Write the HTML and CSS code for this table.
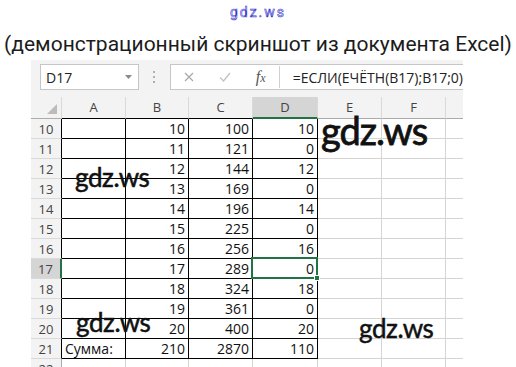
FILE: index.html
```html
<!DOCTYPE html>
<html lang="ru">
<head>
<meta charset="utf-8">
<title>Excel</title>
<link rel="stylesheet" href="styles.css">
</head>
<body>
<div class="site">gdz.ws</div>
<h1 class="title">(демонстрационный скриншот из документа Excel)</h1>
<div class="excel">
  <div class="toolbar">
    <div class="namebox"><span>D17</span><svg class="caret" width="7" height="4" viewBox="0 0 7 4"><path d="M0 0H7L3.5 4Z" fill="#8a8a8a"/></svg></div>
    <div class="grip"><i></i><i></i><i></i></div>
    <div class="fbar">
      <span class="fbtn"><svg width="10" height="10" viewBox="0 0 10 10"><path d="M1 1L9 9M9 1L1 9" stroke="#a8a8a8" stroke-width="1.2"/></svg></span>
      <span class="fbtn"><svg width="12" height="10" viewBox="0 0 12 10"><path d="M1 5.5L4.5 9L11 1" stroke="#c4c4c4" stroke-width="1.4" fill="none"/></svg></span>
      <span class="fx"><i>f<small>x</small></i></span>
      <span class="formula">=ЕСЛИ(ЕЧЁТН(B17);B17;0)</span>
    </div>
  </div>
  <div class="sheet">
    <div class="ch corner"><svg width="10" height="10" viewBox="0 0 10 10"><path d="M10 0V10H0Z" fill="#bcbcbc"/></svg></div>
    <div class="ch bb">A</div><div class="ch bb">B</div><div class="ch bb">C</div><div class="ch sel">D</div><div class="ch">E</div><div class="ch">F</div><div class="ch last"></div>

    <div class="rh br">10</div><div class="c b"></div><div class="c b n">10</div><div class="c b n">100</div><div class="c b n">10</div><div class="c"></div><div class="c"></div><div class="c last"></div>
    <div class="rh br">11</div><div class="c b"></div><div class="c b n">11</div><div class="c b n">121</div><div class="c b n">0</div><div class="c"></div><div class="c"></div><div class="c last"></div>
    <div class="rh br">12</div><div class="c b"></div><div class="c b n">12</div><div class="c b n">144</div><div class="c b n">12</div><div class="c"></div><div class="c"></div><div class="c last"></div>
    <div class="rh br">13</div><div class="c b"></div><div class="c b n">13</div><div class="c b n">169</div><div class="c b n">0</div><div class="c"></div><div class="c"></div><div class="c last"></div>
    <div class="rh br">14</div><div class="c b"></div><div class="c b n">14</div><div class="c b n">196</div><div class="c b n">14</div><div class="c"></div><div class="c"></div><div class="c last"></div>
    <div class="rh br">15</div><div class="c b"></div><div class="c b n">15</div><div class="c b n">225</div><div class="c b n">0</div><div class="c"></div><div class="c"></div><div class="c last"></div>
    <div class="rh br">16</div><div class="c b"></div><div class="c b n">16</div><div class="c b n">256</div><div class="c b n">16</div><div class="c"></div><div class="c"></div><div class="c last"></div>
    <div class="rh rsel">17</div><div class="c b"></div><div class="c b n">17</div><div class="c b n">289</div><div class="c b n active">0<span class="selbox"><span class="handle"></span></span></div><div class="c"></div><div class="c"></div><div class="c last"></div>
    <div class="rh br">18</div><div class="c b"></div><div class="c b n">18</div><div class="c b n">324</div><div class="c b n">18</div><div class="c"></div><div class="c"></div><div class="c last"></div>
    <div class="rh br">19</div><div class="c b"></div><div class="c b n">19</div><div class="c b n">361</div><div class="c b n">0</div><div class="c"></div><div class="c"></div><div class="c last"></div>
    <div class="rh br">20</div><div class="c b"></div><div class="c b n">20</div><div class="c b n">400</div><div class="c b n">20</div><div class="c"></div><div class="c"></div><div class="c last"></div>
    <div class="rh br">21</div><div class="c b">Сумма:</div><div class="c b n">210</div><div class="c b n">2870</div><div class="c b n">110</div><div class="c"></div><div class="c"></div><div class="c last"></div>
    <div class="rh">22</div><div class="c"></div><div class="c"></div><div class="c"></div><div class="c"></div><div class="c"></div><div class="c"></div><div class="c last"></div>
  </div>
</div>
<div class="wm wm-big">gdz.ws</div>
<div class="wm wm-a">gdz.ws</div>
<div class="wm wm-b">gdz.ws</div>
<div class="wm wm-c">gdz.ws</div>
</body>
</html>
```
FILE: styles.css
```css
* { box-sizing: border-box; }
html, body { margin: 0; height: 367px; overflow: hidden; background: #fff; }
body { position: relative; font-family: Roboto, "Noto Sans", sans-serif; }

.site {
  height: 28px;
  line-height: 24px;
  text-align: center;
  font-size: 14px;
  letter-spacing: 2px;
  color: #eef0ff;
  -webkit-text-stroke: 0.6px #3a3ad0;
}
.title {
  margin: 0;
  height: 32px;
  line-height: 32px;
  font-size: 21px;
  font-weight: 400;
  text-align: center;
  color: #1c1c1c;
  white-space: nowrap;
}

.excel {
  margin-left: 31px;
  width: 432px;
  height: 307px;
  background: #f3f3f3;
  overflow: hidden;
  font-family: "Liberation Sans Narrow", "Open Sans", sans-serif;
}
.toolbar {
  height: 37px;
  display: flex;
  align-items: flex-start;
  padding-top: 4px;
}
.namebox {
  margin-left: 9px;
  width: 101px;
  height: 26px;
  background: #fff;
  border: 1px solid #c6c6c6;
  display: flex;
  align-items: center;
  justify-content: space-between;
  padding: 0 6px 0 5px;
  font-size: 14px;
  color: #222;
}
.grip {
  width: 32px;
  height: 26px;
  display: flex;
  flex-direction: column;
  align-items: center;
  justify-content: center;
  gap: 3px;
}
.grip i { width: 2px; height: 2px; background: #b0b0b0; }
.fbar {
  flex: 1;
  height: 26px;
  background: #fff;
  border: 1px solid #c6c6c6;
  border-right: 0;
  display: flex;
  align-items: center;
}
.fbtn {
  width: 36px;
  height: 24px;
  display: flex;
  align-items: center;
  justify-content: center;
}
.fx {
  width: 37px;
  height: 22px;
  border-right: 1px solid #d0d0d0;
  display: flex;
  align-items: center;
  justify-content: center;
  font-family: "Liberation Serif", serif;
  font-size: 16px;
  color: #555;
}
.fx small { font-size: 12px; }
.formula {
  padding-left: 13px;
  font-size: 14px;
  color: #222;
  white-space: nowrap;
}

.sheet {
  display: grid;
  grid-template-columns: 31px 64px 63px 64px 65px 64px 64px 17px;
  grid-template-rows: 22px;
  grid-auto-rows: 20px;
  font-size: 14px;
  color: #111;
}
.ch {
  background: #f3f3f3;
  border-right: 1px solid #d9d9d9;
  border-bottom: 1px solid #ababab;
  text-align: center;
  color: #444;
  font-size: 13px;
  line-height: 21px;
}
.corner {
  display: flex;
  align-items: flex-end;
  justify-content: flex-end;
  padding: 0 4px 4px 0;
}
.ch.bb { border-bottom-color: #000; }
.ch.sel { background: #d5d5d5; border-bottom: 2px solid #217346; }
.rh {
  background: #f3f3f3;
  border-right: 1px solid #ababab;
  border-bottom: 1px solid #d9d9d9;
  text-align: center;
  color: #444;
  font-size: 13px;
  line-height: 20px;
}
.rh.br { border-right-color: #000; }
.rh.rsel { background: #d5d5d5; border-right: 2px solid #217346; }
.c {
  background: #fff;
  border-right: 1px solid #d4d4d4;
  border-bottom: 1px solid #d4d4d4;
  padding: 0 3px 0 3px;
  line-height: 20px;
  white-space: nowrap;
  overflow: visible;
}
.c.b { border-right-color: #000; border-bottom-color: #000; }
.c.n { text-align: right; }
.last { border-right: 0; }
.active { position: relative; }
.selbox {
  position: absolute;
  left: -2px;
  top: -2px;
  right: -1px;
  bottom: -1px;
  border: 2px solid #217346;
}
.handle {
  position: absolute;
  right: -4px;
  bottom: -4px;
  width: 6px;
  height: 6px;
  background: #217346;
  border: 1px solid #fff;
}

.wm {
  position: absolute;
  font-family: Lato, "Open Sans", sans-serif;
  color: #111;
  line-height: 1;
  white-space: nowrap;
  -webkit-text-stroke: 0.5px #111;
}
.wm-big { left: 321px; top: 111px; font-size: 38px; letter-spacing: -1px; -webkit-text-stroke: 0.8px #111; }
.wm-a { left: 75px; top: 164px; font-size: 26px; letter-spacing: -0.4px; }
.wm-b { left: 76px; top: 309px; font-size: 26px; letter-spacing: -0.4px; }
.wm-c { left: 359px; top: 315px; font-size: 26px; letter-spacing: -0.4px; }
```
